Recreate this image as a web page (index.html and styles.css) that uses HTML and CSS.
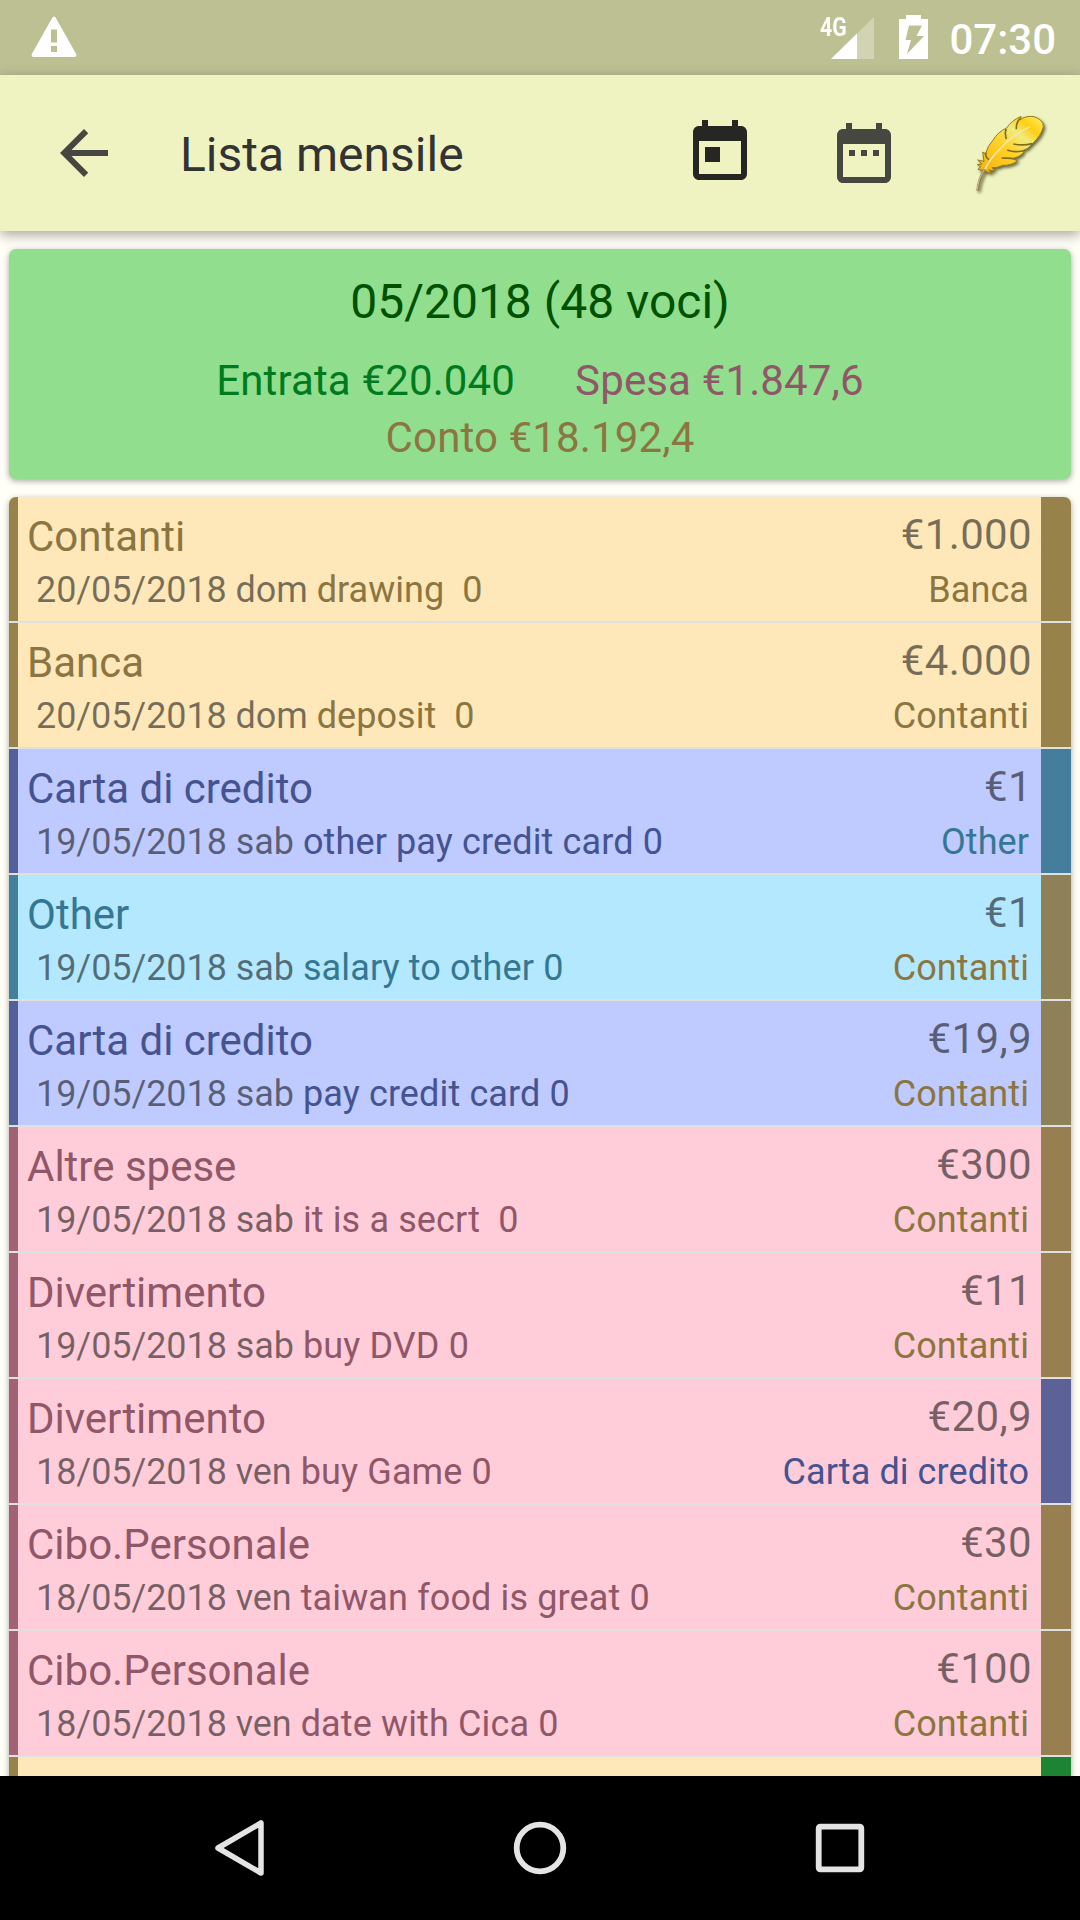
FILE: index.html
```html
<!DOCTYPE html>
<html lang="it">
<head>
<meta charset="utf-8">
<title>Lista mensile</title>
<link rel="stylesheet" href="styles.css">
</head>
<body>
<div class="screen">
  <header class="status">
    <svg class="warn" width="46" height="42" viewBox="0 0 46 42"><path fill="#fff" fill-rule="evenodd" d="M21.6 1.2Q23 -.4 24.4 1.2L45.2 38Q46 41 43.5 41H2.5Q0 41 .8 38ZM20 13.5V26.500H26V13.500ZM20 30V36H26V30Z"/></svg>
    <span class="net">4G</span>
    <svg class="signal" width="43" height="42" viewBox="0 0 43 42"><path fill="#fff" opacity=".3" d="M43 0V42H0Z"/><path fill="#fff" d="M26 16.600V42H0Z"/></svg>
    <svg class="battery" width="29" height="44" viewBox="0 0 29 44"><path fill="#fff" fill-rule="evenodd" d="M7 0H22V4H29V44H0V4H7ZM10 10.500L6.500 25H12L8 39L25 21H17.500L23 10.500Z"/></svg>
    <span class="clock">07:30</span>
  </header>
  <div class="appbar">
    <svg class="back" width="72" height="72" viewBox="0 0 24 24"><path fill="#464740" d="M20 11H7.830l5.590-5.590L12 4l-8 8 8 8 1.410-1.410L7.830 13H20v-2z"/></svg>
    <h1 class="title">Lista mensile</h1>
    <svg class="today" width="72" height="72" viewBox="0 0 24 24"><path fill="#262722" d="M19 3h-1V1h-2v2H8V1H6v2H5c-1.110 0-1.990.9-1.990 2L3 19c0 1.100.89 2 2 2h14c1.100 0 2-.9 2-2V5c0-1.100-.9-2-2-2zm0 16H5V8h14v11zM7 10h5v5H7z"/></svg>
    <svg class="range" width="72" height="72" viewBox="0 0 24 24"><path fill="#464740" d="M9 10H7v2h2v-2zm4 0h-2v2h2v-2zm4 0h-2v2h2v-2zm2-7h-1V1h-2v2H8V1H6v2H5c-1.110 0-1.990.9-1.990 2L3 19c0 1.100.89 2 2 2h14c1.100 0 2-.9 2-2V5c0-1.100-.9-2-2-2zm0 16H5V8h14v11z"/></svg>
    <svg class="feather" width="120" height="110" viewBox="0 0 360 330">
      <defs>
        <linearGradient id="gold" x1="0" y1="1" x2="1" y2="0"><stop offset="0" stop-color="#f5ae0c"/><stop offset=".45" stop-color="#ffd22a"/><stop offset=".66" stop-color="#f0ea80"/><stop offset=".8" stop-color="#ffcf10"/><stop offset="1" stop-color="#fff070"/></linearGradient>
      </defs>
      <g class="plume">
        <path fill="url(#gold)" stroke="#927c20" stroke-width="3" d="M103 212L84 208L92 200L82 194L96 192L83 180L102 184L98 156L107 162Q112 138 128 122Q143 96 170 84Q184 62 213 49L210 60Q226 46 252 50Q281 60 280 80Q274 108 246 132Q235 148 217 152L220 158Q209 171 185 176L203 182Q184 197 158 196Q142 205 126 203L136 213L116 210L126 220L108 215Z"/>
        <path fill="none" stroke="#7f6d1c" stroke-width="5" d="M210 56Q198 68 199 88M169 87Q163 98 169 117M107 158Q106 172 117 179M246 131Q220 138 190 132M217 153Q190 158 172 150M187 175L155 174"/>
        <path fill="none" stroke="#f6e6a0" stroke-width="5" stroke-linecap="round" d="M238 81Q186 105 151 146Q122 174 105 207"/>
        <path fill="none" stroke="#8f7d50" stroke-width="8" d="M105 208Q86 238 83 272"/>
        <path fill="none" stroke="#d2c28c" stroke-width="3" d="M103 208Q84 238 81 270"/>
      </g>
    </svg>
  </div>
  <main class="content">
    <section class="summary">
      <div class="month">05/2018 (48 voci)</div>
      <div class="totals"><span class="income">Entrata €20.040</span><span class="expense">Spesa €1.847,6</span></div>
      <div class="balance">Conto €18.192,4</div>
    </section>
    <section class="list">
      <div class="row cash"><div class="main"><div class="name">Contanti</div><div class="note"> <i>20/05/2018 dom</i> drawing  0</div></div><div class="side"><div class="amount">€1.000</div><div class="from brown">Banca</div></div></div>
      <div class="row cash"><div class="main"><div class="name">Banca</div><div class="note"> <i>20/05/2018 dom</i> deposit  0</div></div><div class="side"><div class="amount">€4.000</div><div class="from brown">Contanti</div></div></div>
      <div class="row card to-other"><div class="main"><div class="name">Carta di credito</div><div class="note"> <i>19/05/2018 sab</i> other pay credit card 0</div></div><div class="side"><div class="amount">€1</div><div class="from teal">Other</div></div></div>
      <div class="row other"><div class="main"><div class="name">Other</div><div class="note"> <i>19/05/2018 sab</i> salary to other 0</div></div><div class="side"><div class="amount">€1</div><div class="from brown">Contanti</div></div></div>
      <div class="row card"><div class="main"><div class="name">Carta di credito</div><div class="note"> <i>19/05/2018 sab</i> pay credit card 0</div></div><div class="side"><div class="amount">€19,9</div><div class="from brown">Contanti</div></div></div>
      <div class="row spend"><div class="main"><div class="name">Altre spese</div><div class="note"> <i>19/05/2018 sab</i> it is a secrt  0</div></div><div class="side"><div class="amount">€300</div><div class="from brown">Contanti</div></div></div>
      <div class="row spend"><div class="main"><div class="name">Divertimento</div><div class="note"> <i>19/05/2018 sab</i> buy DVD 0</div></div><div class="side"><div class="amount">€11</div><div class="from brown">Contanti</div></div></div>
      <div class="row spend to-card"><div class="main"><div class="name">Divertimento</div><div class="note"> <i>18/05/2018 ven</i> buy Game 0</div></div><div class="side"><div class="amount">€20,9</div><div class="from blue">Carta di credito</div></div></div>
      <div class="row spend"><div class="main"><div class="name">Cibo.Personale</div><div class="note"> <i>18/05/2018 ven</i> taiwan food is great 0</div></div><div class="side"><div class="amount">€30</div><div class="from brown">Contanti</div></div></div>
      <div class="row spend"><div class="main"><div class="name">Cibo.Personale</div><div class="note"> <i>18/05/2018 ven</i> date with Cica 0</div></div><div class="side"><div class="amount">€100</div><div class="from brown">Contanti</div></div></div>
      <div class="row cash to-income"></div>
    </section>
  </main>
  <nav class="navbar">
    <svg width="60" height="60" viewBox="0 0 60 60"><path fill="none" stroke="#e4e4e4" stroke-width="5.500" stroke-linejoin="round" d="M51 5V55L8 30Z"/></svg>
    <svg width="60" height="60" viewBox="0 0 60 60"><circle cx="30" cy="30" r="23.300" fill="none" stroke="#e4e4e4" stroke-width="5.800"/></svg>
    <svg width="60" height="60" viewBox="0 0 60 60"><rect x="8.700" y="8.700" width="42.600" height="42.600" rx="1.500" fill="none" stroke="#e4e4e4" stroke-width="5.800"/></svg>
  </nav>
</div>
</body>
</html>
```
FILE: styles.css
```css
* { box-sizing: border-box; }
body { margin: 0; font-family: Roboto, sans-serif; }
svg { display: block; flex: none; }
.screen { width: 1080px; height: 1920px; display: flex; flex-direction: column; overflow: hidden; background: #fffff7; }
.status { height: 75px; flex: none; display: flex; align-items: flex-start; padding: 0 24px 0 31px; background: #bdc092; color: #fff; }
.warn { margin-top: 16px; }
.net { margin: 14px -18px 0 auto; font-size: 26px; line-height: 26px; font-weight: 700; transform: scaleX(.82); }
.signal { margin-top: 17px; }
.battery { margin: 15px 21px 0 25px; }
.clock { margin-top: 15px; font-size: 42px; line-height: 49px; font-weight: 500; }
.appbar { height: 156px; flex: none; display: flex; align-items: center; padding: 0 10px 0 48px; background: #eff3c2; box-shadow: 0 4px 12px rgba(0,0,0,.35); z-index: 1; }
.title { margin: 4px auto 0 60px; font-size: 48px; line-height: 56px; font-weight: 400; color: #333; }
.today { margin-top: 0; }
.range { margin: 6px 0 0 72px; }
.feather { margin: 3px 0 0 50px; }
.plume { filter: drop-shadow(5px 6px 4px rgba(60,60,20,.75)); }
.content { flex: 1; min-height: 0; padding: 18px 9px 0; overflow: hidden; }
.summary { height: 230px; padding-top: 25px; border-radius: 7px; background: #92de8f; box-shadow: 0 2px 6px rgba(0,0,0,.35); text-align: center; }
.month { font-size: 48px; line-height: 56px; color: #005200; }
.totals { display: flex; justify-content: center; gap: 60px; margin-top: 22px; font-size: 42px; line-height: 57px; letter-spacing: .14px; }
.income { color: #007a1f; }
.expense { color: #8f5768; }
.balance { font-size: 42px; line-height: 57px; letter-spacing: .14px; color: #8b7540; }
.list { margin-top: 18px; border-radius: 7px 7px 0 0; background: #e0e0e0; box-shadow: 0 2px 6px rgba(0,0,0,.35); overflow: hidden; }
.row { height: 124px; margin-bottom: 2px; display: flex; justify-content: space-between; padding-right: 9px; border-left: 9px solid; border-right: 30px solid; }
.main { padding: 15px 0 0 9px; }
.name { font-size: 42px; line-height: 50px; }
.note { white-space: pre; font-size: 36px; line-height: 42px; margin-top: 7px; letter-spacing: .13px; }
.note i { font-style: normal; color: rgba(0,0,0,.53); letter-spacing: -.08px; }
.side { text-align: right; padding-top: 13px; }
.amount { font-size: 42px; line-height: 50px; color: rgba(0,0,0,.53); letter-spacing: .35px; }
.from { font-size: 36px; line-height: 42px; margin: 9px 3px 0 0; letter-spacing: .08px; }
.brown { color: #8b7540; }
.teal { color: #357792; }
.blue { color: #455391; }
.cash { background: #fee8ba; color: #8b7540; border-color: #97824c; }
.cash .note { letter-spacing: .04px; }
.card { background: #bfcaff; color: #455391; border-left-color: #53609b; border-right-color: #8e8158; }
.other { background: #b3e8ff; color: #357792; border-left-color: #43809b; border-right-color: #8e8158; }
.spend { background: #ffcdd9; color: #8f5768; border-left-color: #a06274; border-right-color: #977f51; }
.to-other { border-right-color: #457e9d; }
.to-card { border-right-color: #5c6298; }
.to-income { border-right-color: #1c8432; }
.navbar { height: 144px; flex: none; display: flex; justify-content: space-between; align-items: center; padding: 0 210px; background: #000; }
```
